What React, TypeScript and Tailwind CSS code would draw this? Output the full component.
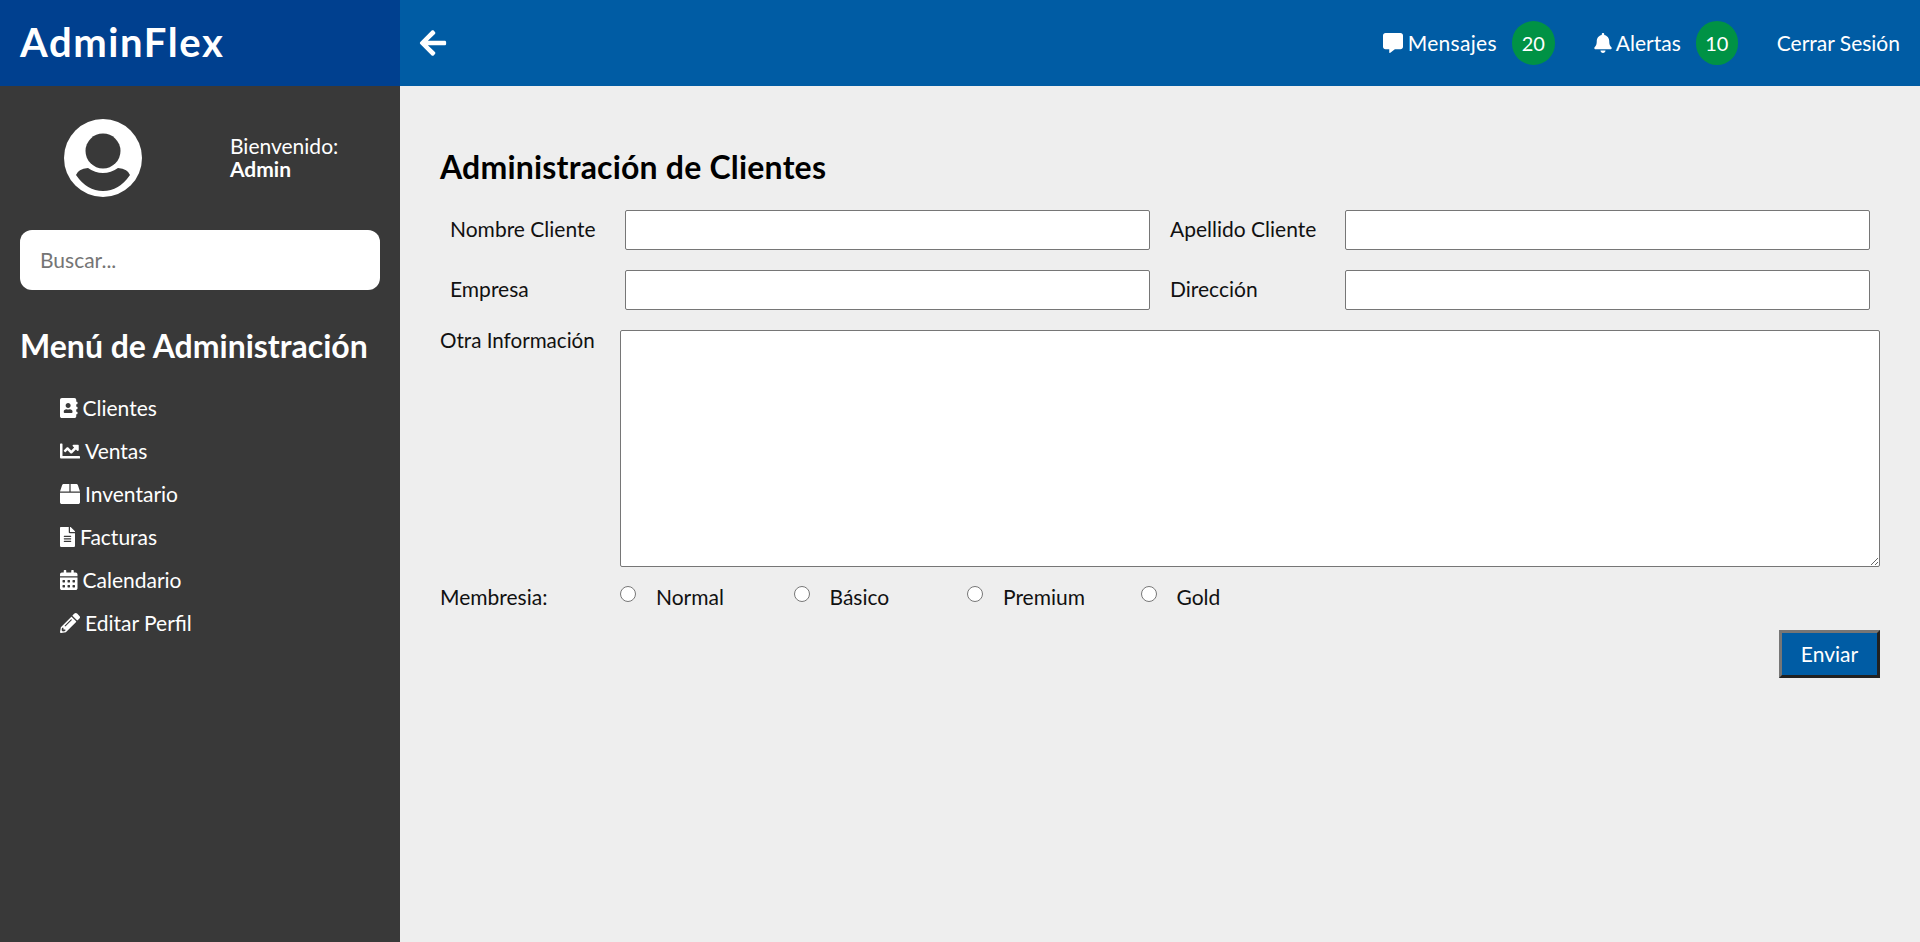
import { FaAddressBook, FaArrowLeft, FaBell, FaBox, FaCalendarAlt, FaChartLine, FaCommentAlt, FaFileAlt, FaPencilAlt } from "react-icons/fa";

const menu = [
  { icon: FaAddressBook, label: "Clientes", width: "w-[17.5px]" },
  { icon: FaChartLine, label: "Ventas", width: "w-5" },
  { icon: FaBox, label: "Inventario", width: "w-5" },
  { icon: FaFileAlt, label: "Facturas", width: "w-[15px]" },
  { icon: FaCalendarAlt, label: "Calendario", width: "w-[17.5px]" },
  { icon: FaPencilAlt, label: "Editar Perfil", width: "w-5" },
];

const plans = ["Normal", "Básico", "Premium", "Gold"];

function Badge({ value, width }: { value: number; width: string }) {
  return (
    <span className={`flex h-11 ${width} ml-[15px] items-center justify-center rounded-full bg-[#009245] text-[20px] text-white`}>{value}</span>
  );
}

function Field({ label }: { label: string }) {
  return (
    <div className="flex items-center">
      <label className="w-[185px] pb-[3px] pl-[10px] text-[#111]">{label}</label>
      <input className="h-10 w-[525px] rounded-[2px] border border-[#767676] bg-white" />
    </div>
  );
}

function Avatar() {
  return (
    <svg viewBox="0 0 78 78" className="h-[78px] w-[78px]">
      <circle cx="39" cy="39" r="39" fill="#fff" />
      <circle cx="39" cy="32" r="17.5" fill="#393939" />
      <path d="M12 56 Q14 50 24 49 Q31 54 39 54 Q47 54 54 49 Q64 50 66 56 Q55 72 39 72 Q23 72 12 56 Z" fill="#393939" />
    </svg>
  );
}

export default function App() {
  return (
    <div className="flex h-[942px] w-[1920px] overflow-hidden bg-[#eeeeee] font-['Lato','Open_Sans',sans-serif] text-[21px] leading-[30px]">
      <aside className="flex w-[400px] shrink-0 flex-col bg-[#393939] text-white">
        <div className="flex h-[86px] items-center bg-[#00408f] px-5 pb-[2px] text-[40px] font-bold tracking-[1.6px]">AdminFlex</div>

        <div className="flex h-[144px] items-center">
          <div className="ml-[64px] mr-[88px]">
            <Avatar />
          </div>
          <div className="pb-[2px] leading-[23px]">
            <p>Bienvenido:</p>
            <p className="font-bold">Admin</p>
          </div>
        </div>

        <div className="px-5">
          <input placeholder="Buscar..." className="h-[60px] w-full rounded-xl bg-white px-5 pb-[2px] text-[#333] placeholder:text-[#757575]" />
        </div>

        <h2 className="mt-[38px] pl-5 text-[32px] font-bold leading-9">Menú de Administración</h2>

        <ul className="mt-[22px] flex flex-col pl-[60px]">
          {menu.map((item) => (
            <li key={item.label} className="flex h-[43px] items-center gap-[5px]">
              <item.icon className={`h-5 ${item.width}`} />
              {item.label}
            </li>
          ))}
        </ul>
      </aside>

      <div className="flex flex-1 flex-col">
        <header className="flex h-[86px] items-center bg-[#005ca4] pl-[18px] pr-5 text-white">
          <FaArrowLeft className="h-[30px] w-[30px]" />
          <div className="ml-auto flex items-center">
            <FaCommentAlt className="h-5 w-5" />
            <span className="ml-[5px] tracking-[0.3px]">Mensajes</span>
            <Badge value={20} width="w-[43px]" />
            <FaBell className="ml-[38px] h-5 w-5" />
            <span className="ml-[3px]">Alertas</span>
            <Badge value={10} width="w-[42px]" />
            <span className="ml-[39px]">Cerrar Sesión</span>
          </div>
        </header>

        <main className="flex flex-col px-10 pt-[63px]">
          <h1 className="text-[32px] font-bold leading-9 tracking-[0.2px] text-black">Administración de Clientes</h1>

          <div className="mt-[25px] flex flex-col gap-5">
            <div className="flex gap-[10px]">
              <Field label="Nombre Cliente" />
              <Field label="Apellido Cliente" />
            </div>
            <div className="flex gap-[10px]">
              <Field label="Empresa" />
              <Field label="Dirección" />
            </div>
          </div>

          <div className="mt-5 flex">
            <label className="w-[180px] text-[20.6px] leading-[20px] text-[#111]">Otra Información</label>
            <textarea className="h-[237px] flex-1 rounded-[2px] border border-[#767676] bg-white" />
          </div>

          <div className="mt-[15px] flex items-center text-[#111]">
            <span className="w-[180px]">Membresia:</span>
            {plans.map((plan) => (
              <label key={plan} className="flex w-[173.5px] items-center">
                <input type="radio" name="plan" className="mb-[6px] ml-0 mr-[20px] h-4 w-4" />
                {plan}
              </label>
            ))}
          </div>

          <div className="mt-[18px] flex justify-end">
            <button className="h-12 w-[101px] border-[3px] border-t-[#767676] border-l-[#767676] border-r-[#212121] border-b-[#212121] bg-[#005ca4] text-white">Enviar</button>
          </div>
        </main>
      </div>
    </div>
  );
}
